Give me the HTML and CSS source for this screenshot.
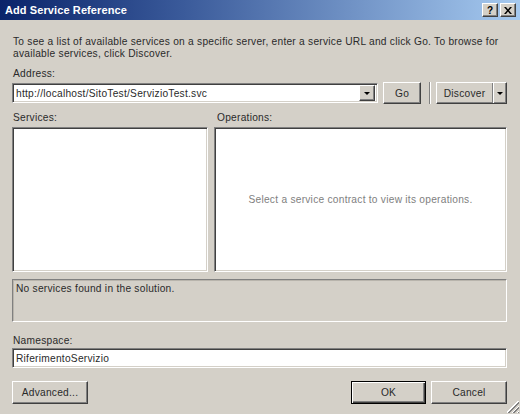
FILE: index.html
```html
<!DOCTYPE html>
<html lang="en">
<head>
    <meta charset="UTF-8">
    <title>Add Service Reference</title>
    <link rel="stylesheet" href="styles.css">
</head>
<body>
    <div class="dialog">
        <div class="titlebar">
            <span class="title">Add Service Reference</span>
            <div class="caption-buttons">
                <span class="cap-btn">?</span>
                <span class="cap-btn">
                    <svg width="8" height="7" viewBox="0 0 8 7"><path d="M0 0h2l2 2.5L6 0h2L5 3.5 8 7H6L4 4.5 2 7H0l3-3.5z" fill="#000"/></svg>
                </span>
            </div>
        </div>

        <div class="content">
            <p class="intro">To see a list of available services on a specific server, enter a service URL and click Go. To browse for<br>available services, click Discover.</p>

            <div class="field-label">Address:</div>
            <div class="address-row">
                <div class="combo">
                    <span class="combo-text">http://localhost/SitoTest/ServizioTest.svc</span>
                    <span class="drop-btn"><span class="arrow"></span></span>
                </div>
                <button class="btn btn-go">Go</button>
                <span class="etched-sep"></span>
                <div class="btn split-btn">
                    <span class="split-main">Discover</span>
                    <span class="split-arrow"><span class="arrow"></span></span>
                </div>
            </div>

            <div class="lists">
                <div class="list-col">
                    <div class="field-label">Services:</div>
                    <div class="listbox"></div>
                </div>
                <div class="list-col">
                    <div class="field-label">Operations:</div>
                    <div class="listbox ops">
                        <span class="hint">Select a service contract to view its operations.</span>
                    </div>
                </div>
            </div>

            <div class="status">No services found in the solution.</div>

            <div class="field-label ns-label">Namespace:</div>
            <div class="textbox">RiferimentoServizio</div>

            <div class="footer">
                <button class="btn btn-advanced">Advanced...</button>
                <span class="spacer"></span>
                <button class="btn btn-default">OK</button>
                <button class="btn btn-cancel">Cancel</button>
            </div>
        </div>

        <span class="grip"></span>
    </div>
</body>
</html>
```

FILE: styles.css
```css
* {
    margin: 0;
    padding: 0;
    box-sizing: border-box;
}

body {
    background-color: #d4d0c8;
    font-family: 'Liberation Sans', Arial, sans-serif;
    font-size: 10.2px;
    letter-spacing: 0.25px;
    color: #2a2a2a;
}

.dialog {
    position: relative;
    width: 520px;
    height: 414px;
    background-color: #d4d0c8;
    overflow: hidden;
}

/* title bar */
.titlebar {
    height: 20px;
    display: flex;
    align-items: center;
    justify-content: space-between;
    padding: 0 4px 0 5px;
    background: linear-gradient(to right, #0a246a, #3a5a9a 35%, #a6caf0);
}

.title {
    color: #fff;
    font-weight: bold;
    font-size: 11px;
    letter-spacing: 0.1px;
}

.caption-buttons {
    display: flex;
    gap: 2px;
}

.cap-btn {
    width: 16px;
    height: 14px;
    display: flex;
    align-items: center;
    justify-content: center;
    background-color: #d4d0c8;
    border: 1px solid;
    border-color: #fff #404040 #404040 #fff;
    box-shadow: inset -1px -1px #808080;
    font-weight: bold;
    font-size: 10px;
    letter-spacing: 0;
    color: #000;
}

/* content */
.content {
    padding: 16px 13px 0 12px;
    display: flex;
    flex-direction: column;
}

.intro {
    line-height: 12px;
    white-space: nowrap;
    padding-left: 1px;
    margin-bottom: 8px;
}

.field-label {
    line-height: 12px;
    padding-left: 1px;
}

.address-row {
    display: flex;
    align-items: center;
    margin-top: 2px;
    height: 22px;
}

.combo {
    width: 366px;
    height: 20px;
    display: flex;
    align-items: center;
    background-color: #fff;
    border: 1px solid;
    border-color: #808080 #fff #fff #808080;
    box-shadow: inset 1px 1px #404040, inset -1px -1px #d4d0c8;
    padding: 2px 2px 2px 3px;
}

.combo-text {
    flex: 1;
}

.drop-btn {
    width: 16px;
    height: 16px;
    display: flex;
    align-items: center;
    justify-content: center;
    background-color: #d4d0c8;
    border: 1px solid;
    border-color: #fff #404040 #404040 #fff;
    box-shadow: inset -1px -1px #808080;
}

.arrow {
    width: 0;
    height: 0;
    border-left: 3px solid transparent;
    border-right: 3px solid transparent;
    border-top: 3px solid #000;
}

.btn {
    font-family: inherit;
    font-size: inherit;
    letter-spacing: inherit;
    color: #2a2a2a;
    background-color: #d4d0c8;
    border: 1px solid;
    border-color: #fff #404040 #404040 #fff;
    box-shadow: inset -1px -1px #808080;
    height: 22px;
}

.btn-go {
    width: 38px;
    margin-left: 5px;
}

.etched-sep {
    width: 2px;
    height: 22px;
    margin: 0 5px 0 8px;
    border-left: 1px solid #808080;
    border-right: 1px solid #fff;
}

.split-btn {
    width: 71px;
    display: flex;
    align-items: stretch;
}

.split-main {
    flex: 1;
    display: flex;
    align-items: center;
    justify-content: center;
    border-right: 1px solid #808080;
}

.split-arrow {
    width: 13px;
    display: flex;
    align-items: center;
    justify-content: center;
    border-left: 1px solid #fff;
}

/* lists */
.lists {
    display: grid;
    grid-template-columns: 196px 1fr;
    gap: 6px;
    margin-top: 8px;
}

.list-col .field-label {
    margin-bottom: 3px;
}

.list-col:last-child .field-label {
    padding-left: 3px;
}

.listbox {
    height: 145px;
    background-color: #fff;
    border: 1px solid;
    border-color: #808080 #fff #fff #808080;
    box-shadow: inset 1px 1px #404040, inset -1px -1px #d4d0c8;
}

.ops {
    display: flex;
    align-items: center;
    justify-content: center;
}

.hint {
    color: #808080;
}

.status {
    height: 43px;
    margin-top: 7px;
    padding: 3px 3px;
    line-height: 12px;
    border: 1px solid;
    border-color: #808080 #fff #fff #808080;
    box-shadow: inset 1px 1px #b8b4ac;
}

.ns-label {
    margin-top: 13px;
}

.textbox {
    height: 20px;
    margin-top: 1px;
    display: flex;
    align-items: center;
    padding-left: 3px;
    background-color: #fff;
    border: 1px solid;
    border-color: #808080 #fff #fff #808080;
    box-shadow: inset 1px 1px #404040, inset -1px -1px #d4d0c8;
}

.footer {
    display: flex;
    align-items: center;
    margin-top: 13px;
}

.footer .btn {
    height: 23px;
}

.btn-advanced {
    width: 76px;
}

.spacer {
    flex: 1;
}

.btn-default {
    width: 75px;
    border: 1px solid #000;
    box-shadow: inset 1px 1px #fff, inset -1px -1px #404040, inset -2px -2px #808080;
}

.btn-cancel {
    width: 76px;
    margin-left: 5px;
}

/* resize grip in the corner */
.grip {
    position: absolute;
    right: 1px;
    bottom: 1px;
    width: 12px;
    height: 12px;
    background: linear-gradient(135deg,
        transparent 45%, #fff 45%, #fff 52%, #808080 52%, #808080 60%,
        transparent 60%, transparent 67%, #fff 67%, #fff 74%, #808080 74%, #808080 82%,
        transparent 82%, transparent 88%, #fff 88%, #fff 94%, #808080 94%);
}
```
